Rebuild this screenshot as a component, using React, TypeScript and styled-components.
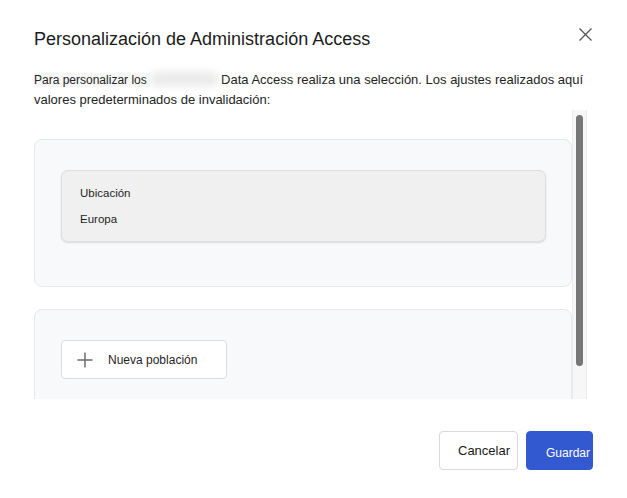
import React from 'react';
import styled, { createGlobalStyle } from 'styled-components';

const GlobalStyle = createGlobalStyle`
    html, body {
        margin: 0;
        padding: 0;
        background: #ffffff;
    }

    body {
        font-family: "Liberation Sans", Arial, sans-serif;
        color: #242424;
    }
`;

const Dialog = styled.div`
    width: 627px;
    height: 498px;
    display: flex;
    flex-direction: column;
    background: #ffffff;
    box-sizing: border-box;
`;

const Header = styled.div`
    display: flex;
    justify-content: space-between;
    align-items: flex-start;
    padding: 27px 35px 0 34px;
`;

const Title = styled.h1`
    margin: 0;
    font-size: 18px;
    line-height: 24px;
    font-weight: 400;
    color: #1b1b1b;
`;

const CloseButton = styled.button`
    width: 13px;
    height: 13px;
    margin-top: 1px;
    padding: 0;
    border: 0;
    background: transparent;
    display: flex;
    cursor: pointer;
`;

const Intro = styled.p`
    margin: 19px 40px 0 34px;
    font-size: 13px;
    line-height: 20px;
    color: #242424;
`;

const Lead = styled.span`
    font-size: 12px;
    background: #f6f6f6;
`;

const Redacted = styled.span`
    display: inline-block;
    width: 68px;
    height: 14px;
    margin: 0 3px 0 0;
    vertical-align: -2px;
    border-radius: 6px;
    background: #e9e9e9;
    filter: blur(4px);
`;

const ScrollFrame = styled.div`
    display: flex;
    margin-left: 34px;
    width: 553px;
    height: 289px;
`;

const Viewport = styled.div`
    flex: 1;
    overflow: hidden;
`;

const Rail = styled.div`
    width: 15px;
    flex-shrink: 0;
    box-sizing: border-box;
    padding: 5px 4px 0;
    background: #f7f7f7;
    box-shadow: inset 1px 0 #ececec, inset -1px 0 #ececec;
`;

const Thumb = styled.div`
    height: 251px;
    border-radius: 4px;
    background: #777777;
`;

const ScrollContent = styled.div`
    display: flex;
    flex-direction: column;
    gap: 22px;
    padding: 29px 0 19px;
`;

const Card = styled.section`
    background: #f8f9fb;
    border: 1px solid #e6e8eb;
    border-radius: 8px;
    padding: 30px 25px 44px 26px;
`;

const Field = styled.div`
    background: #f0f0f0;
    border: 1px solid #dedede;
    border-radius: 7px;
    padding: 9px 18px;
    box-shadow: 0 1px 2px rgba(0, 0, 0, 0.12);
`;

const FieldLine = styled.div`
    font-size: 11.5px;
    line-height: 26px;
    color: #1f1f1f;
`;

const AddButton = styled.button`
    display: inline-flex;
    align-items: center;
    gap: 15px;
    width: 166px;
    height: 39px;
    padding: 0 0 0 15px;
    border: 1px solid #dcdcdc;
    border-radius: 4px;
    background: #ffffff;
    font-family: inherit;
    font-size: 12px;
    color: #1f1f1f;
    cursor: pointer;
`;

const Footer = styled.div`
    display: flex;
    justify-content: flex-end;
    gap: 8px;
    margin-top: 32px;
    padding: 0 34px;
`;

const FooterButton = styled.button<{ $primary?: boolean }>`
    height: 39px;
    box-sizing: border-box;
    border-radius: 4px;
    font-family: inherit;
    cursor: pointer;
    border: 1px solid ${({ $primary }) => ($primary ? '#3359d1' : '#d9d9d9')};
    background: ${({ $primary }) => ($primary ? '#3359d1' : '#ffffff')};
    color: ${({ $primary }) => ($primary ? '#ffffff' : '#1a1a1a')};
    font-size: ${({ $primary }) => ($primary ? '12px' : '13px')};
    width: ${({ $primary }) => ($primary ? '67px' : '79px')};
    padding: ${({ $primary }) => ($primary ? '5px 2px 0 19px' : '0 9px 0 18px')};
    text-align: left;
`;

const CloseIcon = () => (
    <svg width="13" height="13" viewBox="0 0 13 13" fill="none">
        <path d="M0.5 0.5L12.5 12.5M12.5 0.5L0.5 12.5" stroke="#555" strokeWidth="1.3" />
    </svg>
);

const PlusIcon = () => (
    <svg width="16" height="16" viewBox="0 0 16 16" fill="none">
        <path d="M8 0.5V15.5M0.5 8H15.5" stroke="#6b6b6b" strokeWidth="1.5" />
    </svg>
);

export default function App() {
    return (
        <>
            <GlobalStyle />
            <Dialog>
                <Header>
                    <Title>Personalización de Administración Access</Title>
                    <CloseButton aria-label="Cerrar">
                        <CloseIcon />
                    </CloseButton>
                </Header>
                <Intro>
                    <Lead>Para personalizar los </Lead>
                    <Redacted />
                    Data Access realiza una selección. Los ajustes realizados aquí
                    <br />
                    valores predeterminados de invalidación:
                </Intro>
                <ScrollFrame>
                    <Viewport>
                        <ScrollContent>
                            <Card>
                                <Field>
                                    <FieldLine>Ubicación</FieldLine>
                                    <FieldLine>Europa</FieldLine>
                                </Field>
                            </Card>
                            <Card>
                                <AddButton>
                                    <PlusIcon />
                                    Nueva población
                                </AddButton>
                            </Card>
                        </ScrollContent>
                    </Viewport>
                    <Rail>
                        <Thumb />
                    </Rail>
                </ScrollFrame>
                <Footer>
                    <FooterButton>Cancelar</FooterButton>
                    <FooterButton $primary>Guardar</FooterButton>
                </Footer>
            </Dialog>
        </>
    );
}
